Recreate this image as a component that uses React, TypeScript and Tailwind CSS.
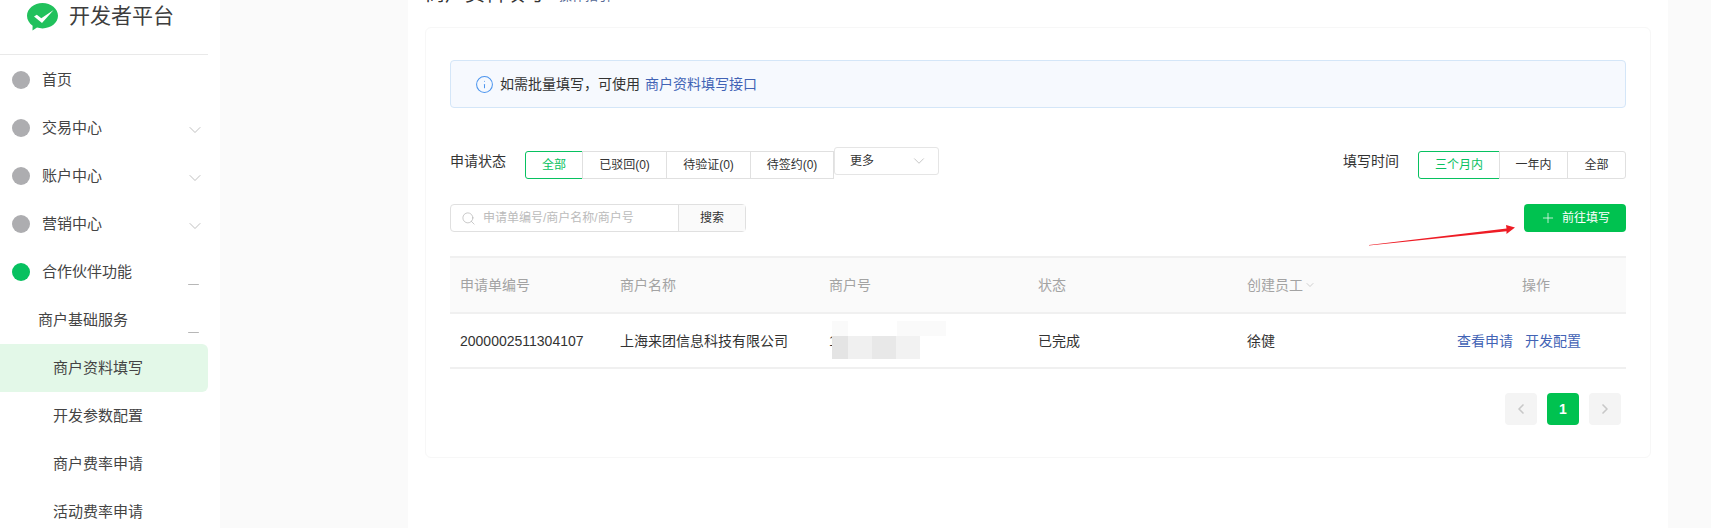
import { ChevronDown, ChevronLeft, ChevronRight, Info, Minus, Plus, Search } from "lucide-react";

const font = "font-['Liberation_Sans','Noto_Sans_CJK_SC',sans-serif]";

const navItems = [
  { label: "首页" },
  { label: "交易中心", arrow: true },
  { label: "账户中心", arrow: true },
  { label: "营销中心", arrow: true },
];

const subItems = ["商户资料填写", "开发参数配置", "商户费率申请", "活动费率申请"];

function Logo() {
  return (
    <svg width="31" height="28" viewBox="0 0 31 28" className="shrink-0">
      <path d="M15.5 0C24 0 31 5.8 31 12.8C31 19.8 24 25.4 15.5 25.4C13.5 25.4 11.7 25.1 10 24.6L5.5 27.5L5.6 22.8C2.2 20.4 0 16.8 0 12.8C0 5.8 7 0 15.5 0Z" fill="#21c15c" />
      <path d="M7 13.6L9.8 11.8L14.3 15.2L26.6 7L15 20Z" fill="#fff" />
    </svg>
  );
}

function Sidebar() {
  return (
    <aside className="w-[220px] shrink-0 bg-white pr-3">
      <div className="flex h-[55px] items-start gap-[11px] border-b border-[#e9e9e9] pl-[27px] pt-[3px]">
        <Logo />
        <span className="text-[21px] leading-[26px] text-[#3d3d3d]">开发者平台</span>
      </div>
      <div className="pt-px">
        {navItems.map((item) => (
          <div key={item.label} className="flex h-12 items-center pl-3 pr-[3px] text-[15px] text-[#444]">
            <span className="h-[18px] w-[18px] rounded-full bg-[#adadb0]" />
            <span className="ml-3 flex-1">{item.label}</span>
            {item.arrow && <ChevronDown size={20} strokeWidth={0.9} className="mt-1 text-[#aaa]" />}
          </div>
        ))}
        <div className="flex h-12 items-center pl-3 pr-[6px] text-[15px] text-[#444]">
          <span className="h-[18px] w-[18px] rounded-full bg-[#07c160]" />
          <span className="ml-3 flex-1">合作伙伴功能</span>
          <Minus size={17} strokeWidth={1.2} className="mt-6 text-[#aaa]" />
        </div>
        <div className="flex h-12 items-center pl-[38px] pr-[6px] text-[15px] text-[#444]">
          <span className="flex-1">商户基础服务</span>
          <Minus size={17} strokeWidth={1.2} className="mt-6 text-[#aaa]" />
        </div>
        {subItems.map((label, i) => (
          <div
            key={label}
            className={`flex h-12 items-center pl-[53px] text-[15px] text-[#444] ${i === 0 ? "rounded-r-md bg-[#e3f8e8]" : ""}`}
          >
            {label}
          </div>
        ))}
      </div>
    </aside>
  );
}

function Tabs({ items, widths, roundEnd }: { items: string[]; widths: string[]; roundEnd?: boolean }) {
  return (
    <div className="flex h-7 text-xs text-[#333]">
      {items.map((item, i) => (
        <div
          key={item}
          className={`flex items-center justify-center border ${widths[i]} ${
            i === 0 ? "rounded-l-[3px] border-[#07c160] text-[#07c160]" : "-ml-px border-[#e0e0e0]"
          } ${roundEnd && i === items.length - 1 ? "rounded-r-[3px]" : ""}`}
        >
          {item}
        </div>
      ))}
    </div>
  );
}

function Arrow() {
  return (
    <svg width="160" height="30" viewBox="0 0 160 30" className="absolute left-[1365px] top-[220px]">
      <path d="M4 25L141.5 8.6L141 5L150 7.5L141.5 14L141.5 11.2L4 25.5Z" fill="#ee1c25" />
    </svg>
  );
}

export default function App() {
  return (
    <div className={`relative flex h-[528px] w-[1711px] overflow-hidden bg-[#fafafa] ${font}`}>
      <Sidebar />
      <main className="ml-[188px] w-[1260px] shrink-0 bg-white px-[17px]">
        <div className="-mt-[14px] flex h-[41px] items-start">
          <h1 className="text-xl leading-[16px] text-[#333]">商户资料填写</h1>
          <span className="ml-[14px] mt-[2px] text-[13px] leading-[16px] text-[#576b95]">操作指引</span>
        </div>
        <section className="h-[431px] rounded-md border border-[#f7f7f7] pl-6 pr-6 pt-8">
          <div className="flex h-12 items-center rounded border border-[#d4e6f8] bg-[#f6f9fe] pl-6 text-sm text-[#333]">
            <Info size={19} strokeWidth={1.3} className="mr-[6px] text-[#4c95ee]" />
            如需批量填写，可使用
            <span className="ml-[5px] text-[#4263b5]">商户资料填写接口</span>
          </div>

          <div className="mt-[43px] flex items-start justify-between">
            <div className="flex items-start">
              <span className="w-[75px] text-sm leading-5 text-[#333]">申请状态</span>
              <Tabs items={["全部", "已驳回(0)", "待验证(0)", "待签约(0)"]} widths={["w-[58px]", "w-[85px]", "w-[85px]", "w-[84px]"]} />
              <div className="-mt-1 flex h-7 w-[105px] items-center justify-between rounded-[3px] border border-[#e5e5e5] pl-[15px] pr-[10px] text-xs text-[#333]">
                更多
                <ChevronDown size={18} strokeWidth={0.9} className="text-[#aaa]" />
              </div>
            </div>
            <div className="flex items-start">
              <span className="mr-[19px] text-sm leading-5 text-[#333]">填写时间</span>
              <Tabs items={["三个月内", "一年内", "全部"]} widths={["w-[82px]", "w-[69px]", "w-[59px]"]} roundEnd />
            </div>
          </div>

          <div className="mt-[25px] flex items-center justify-between">
            <div className="flex h-7 w-[296px] rounded border border-[#e0e0e0] text-xs">
              <div className="flex flex-1 items-center pl-[10px] text-[#bbb]">
                <Search size={15} strokeWidth={1} className="mr-[7px] text-[#aaa]" />
                申请单编号/商户名称/商户号
              </div>
              <div className="flex w-[67px] items-center justify-center border-l border-[#e0e0e0] bg-[#fafafa] text-[#333]">搜索</div>
            </div>
            <div className="flex h-7 w-[102px] items-center justify-center rounded bg-[#00c250] text-xs text-white">
              <Plus size={16} strokeWidth={1.1} className="mr-[6px]" />
              前往填写
            </div>
          </div>

          <div className="mt-6 text-sm">
            <div className="grid h-[58px] grid-cols-[160px_209px_209px_209px_209px_1fr] items-center border-y-2 border-[#f0f0f0] bg-[#fafafa] text-[#a3a3a3]">
              <span className="pl-[10px]">申请单编号</span>
              <span className="pl-[10px]">商户名称</span>
              <span className="pl-[10px]">商户号</span>
              <span className="pl-[10px]">状态</span>
              <span className="flex items-center pl-[10px]">
                创建员工
                <ChevronDown size={12} strokeWidth={1} className="ml-px" />
              </span>
              <span className="text-center">操作</span>
            </div>
            <div className="relative grid h-[55px] grid-cols-[160px_209px_209px_209px_209px_1fr] items-center border-b-2 border-[#f0f0f0] text-[#333]">
              <span className="pl-[10px]">2000002511304107</span>
              <span className="pl-[10px]">上海来团信息科技有限公司</span>
              <span className="pl-[10px]">1</span>
              <span className="pl-[10px]">已完成</span>
              <span className="pl-[10px]">徐健</span>
              <span className="pl-[11px] text-[#4263b5]">
                查看申请<span className="ml-3">开发配置</span>
              </span>
              <div className="absolute left-[382px] top-[7px] h-[15px] w-4 bg-[#fafafa]" />
              <div className="absolute left-[447px] top-[7px] h-[15px] w-[49px] bg-[#fafafa]" />
              <div className="absolute left-[382px] top-[22px] flex h-[23px]">
                <div className="w-4 bg-[#e4e4e4]" />
                <div className="w-6 bg-[#f0f0f0]" />
                <div className="w-6 bg-[#e8e8e8]" />
                <div className="w-6 bg-[#f2f2f2]" />
              </div>
            </div>
          </div>

          <div className="mt-6 flex justify-end gap-[10px] pr-[5px]">
            <div className="flex h-8 w-8 items-center justify-center rounded-sm bg-[#f4f4f4] text-[#c8c8c8]">
              <ChevronLeft size={16} strokeWidth={2.5} />
            </div>
            <div className="flex h-8 w-8 items-center justify-center rounded-sm bg-[#00c250] text-sm font-bold text-white">1</div>
            <div className="flex h-8 w-8 items-center justify-center rounded-sm bg-[#f4f4f4] text-[#c8c8c8]">
              <ChevronRight size={16} strokeWidth={2.5} />
            </div>
          </div>
        </section>
      </main>
      <Arrow />
    </div>
  );
}
